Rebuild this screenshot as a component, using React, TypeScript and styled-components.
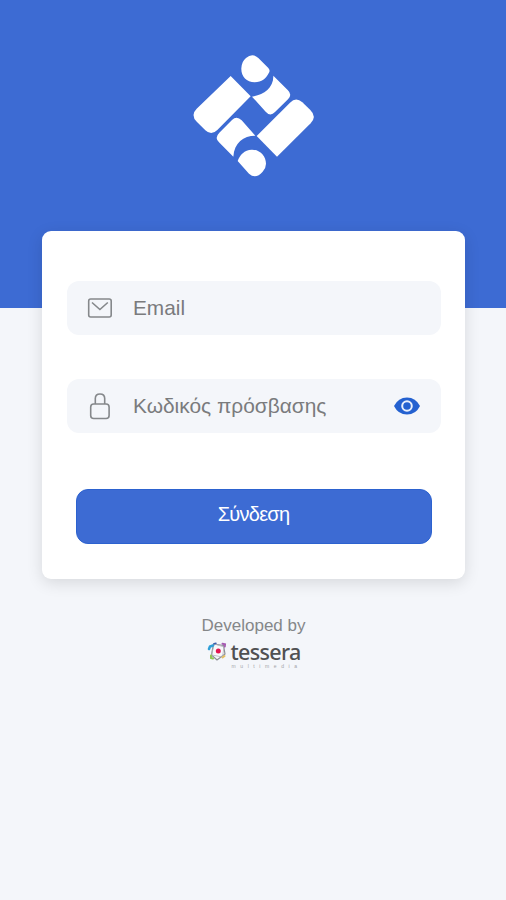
import React from 'react';
import styled, { createGlobalStyle } from 'styled-components';

const GlobalStyle = createGlobalStyle`
  * { box-sizing: border-box; }
  body { margin: 0; background: #f4f6fa; font-family: "Liberation Sans", Arial, sans-serif; }
`;

const Screen = styled.main`
  display: flex;
  flex-direction: column;
  align-items: center;
  height: 900px;
  overflow: hidden;
  background: linear-gradient(#3d6bd3 308px, #f4f6fa 308px);
`;

const Brand = styled.header`
  display: flex;
  height: 231px;
  padding-top: 46px;

  svg { width: 140px; height: 140px; }
`;

const Card = styled.form`
  display: flex;
  flex-direction: column;
  align-items: center;
  width: 423px;
  height: 348px;
  margin-left: 1px;
  padding-top: 50px;
  border-radius: 9px;
  background: #fff;
  box-shadow: 0 4px 16px rgba(0, 0, 0, 0.12);
`;

const Field = styled.label`
  display: flex;
  align-items: center;
  width: 374px;
  height: 54px;
  margin-bottom: 44px;
  padding: 0 21px 0 20px;
  border-radius: 12px;
  background: #f4f6fa;
`;

const FieldIcon = styled.span`
  display: flex;
  width: 46.5px;
`;

const Hint = styled.span<{ $size: number }>`
  flex: 1;
  color: #7a7b7d;
  font-size: ${(p) => p.$size}px;
  line-height: 26px;
  white-space: nowrap;
`;

const Submit = styled.button`
  width: 356px;
  height: 55px;
  margin-top: 12px;
  padding: 0 0 5px;
  border: 1px solid #2c62cf;
  border-radius: 12px;
  background: #3d6bd3;
  color: #fff;
  font: 20px/26px "Liberation Sans", Arial, sans-serif;
  letter-spacing: -0.75px;
`;

const Credit = styled.footer`
  display: flex;
  flex-direction: column;
  align-items: center;
  margin-top: 36px;
  padding-left: 1px;
  color: #858789;
  font-size: 17px;
  line-height: 22px;
`;

const Studio = styled.div`
  display: flex;
  align-items: flex-start;
  gap: 2px;
  margin-top: 3px;
`;

const StudioText = styled.div`
  display: flex;
  flex-direction: column;
  width: 70px;
`;

const StudioName = styled.span`
  color: #505052;
  font: 500 21.5px/23px "Noto Sans", sans-serif;
  letter-spacing: -0.65px;
  white-space: nowrap;
`;

const StudioKind = styled.span`
  padding-left: 1px;
  color: #a2a4a8;
  font-size: 5px;
  line-height: 6px;
  letter-spacing: 4.6px;
  white-space: nowrap;
`;

const Logo = () => (
  <svg viewBox="0 0 420 420" fill="#fff">
    <path d="M143 90L203 151L103 252Q85 270 67 253L42 228Q21 208 41 188Z" />
    <path d="M282 332L221 270L321 170Q339 152 358 169L382 192Q402 212 383 232Z" />
    <path d="M207 152C239 147 272 128 271 89L314 132Q329 146 315 160L276 198Q262 213 248 197Z" />
    <path d="M217 269C181 269 154 290 151 332L108 289Q94 275 109 260L147 222Q161 208 176 223Z" />
    <path d="M189 36Q208 20 226 36L256 66Q263 74 257 82C248 98 237 109 215 109C190 109 174 90 175 67Q176 46 189 36Z" />
    <path d="M164 345C171 326 184 312 206 311C231 310 249 331 249 353Q249 366 239 377Q218 401 198 383Z" />
  </svg>
);

const MailIcon = () => (
  <svg width="26" height="20" viewBox="0 0 26 20" fill="none" stroke="#85888b" strokeWidth="1.6">
    <rect x="1.7" y="1" width="22.5" height="18" rx="2" />
    <path d="M5 4.5L12.9 11.5L20.8 4.5" />
  </svg>
);

const LockIcon = () => (
  <svg width="26" height="28" viewBox="0 0 26 28" fill="none" stroke="#85888b" strokeWidth="1.6">
    <rect x="3.7" y="12" width="18.4" height="14.5" rx="3" />
    <path d="M8.3 12V6.6Q8.3 2 13 2Q17.7 2 17.7 6.6V12" />
  </svg>
);

const EyeIcon = () => (
  <svg width="26" height="18" viewBox="0 0 26 18">
    <path d="M0 9Q4.2 .4 13 .4Q21.8 .4 26 9Q21.8 17.6 13 17.6Q4.2 17.6 0 9Z" fill="#2461d0" />
    <circle cx="13" cy="9" r="4.8" fill="#2461d0" stroke="#e9f0fc" strokeWidth="2" />
  </svg>
);

const StudioMark = () => (
  <svg width="22" height="24" viewBox="0 0 22 24" fill="none" strokeLinecap="round">
    <path d="M6.5 4L16.5 5.5L18 14L10 20L4.5 15Z" fill="#f8f8fb" stroke="#8c8e94" strokeWidth="1.2" />
    <path d="M7.5 4L17 7L15.5 17L5 15Z" stroke="#b4b5bb" strokeWidth=".8" />
    <path d="M2 9L3 6.5L6 5.5" stroke="#2e9fd8" strokeWidth="2.6" />
    <path d="M7 3.8L9 3.3" stroke="#385daf" strokeWidth="1.4" />
    <path d="M15.5 3.8L18 4.3L17.8 6.5" stroke="#a65bb2" strokeWidth="2" />
    <path d="M4 15.5L4 18L6 18.5" stroke="#91c653" strokeWidth="2" />
    <path d="M15.5 17.5L17.5 16" stroke="#e5bf62" strokeWidth="2" />
    <circle cx="11.3" cy="11" r="2.5" fill="#e51651" />
  </svg>
);

export default function App() {
  return (
    <>
      <GlobalStyle />
      <Screen>
        <Brand><Logo /></Brand>
        <Card>
          <Field>
            <FieldIcon><MailIcon /></FieldIcon>
            <Hint $size={20.8}>Email</Hint>
          </Field>
          <Field>
            <FieldIcon><LockIcon /></FieldIcon>
            <Hint $size={20.9}>Κωδικός πρόσβασης</Hint>
            <EyeIcon />
          </Field>
          <Submit type="button">Σύνδεση</Submit>
        </Card>
        <Credit>
          <span>Developed by</span>
          <Studio>
            <StudioMark />
            <StudioText>
              <StudioName>tessera</StudioName>
              <StudioKind>multimedia</StudioKind>
            </StudioText>
          </Studio>
        </Credit>
      </Screen>
    </>
  );
}
